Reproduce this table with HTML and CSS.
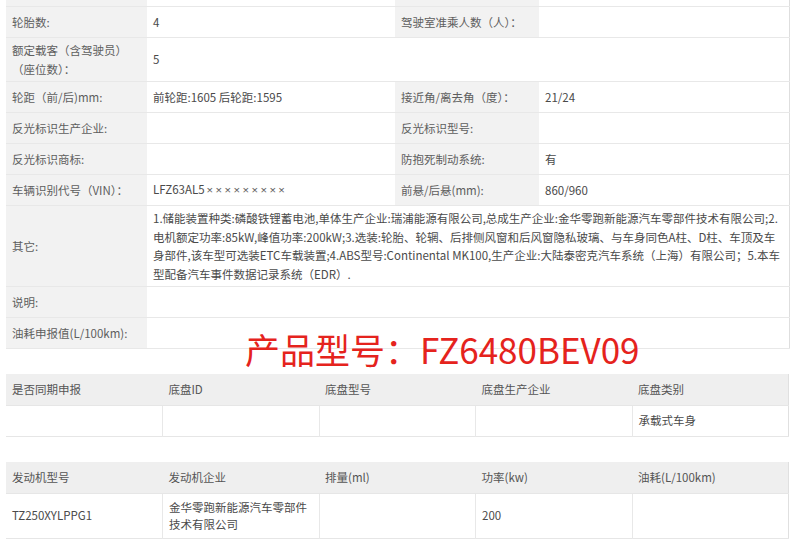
FILE: index.html
```html
<!DOCTYPE html>
<html lang="zh-CN">
<head>
  <meta charset="UTF-8">
  <title>产品型号 FZ6480BEV09</title>
  <link rel="stylesheet" href="styles.css">
</head>
<body>
  <div class="page">
    <table class="params">
      <colgroup>
        <col class="c-label1">
        <col class="c-value1">
        <col class="c-label2">
        <col class="c-value2">
      </colgroup>
      <tr class="cut">
        <th></th><td></td><th></th><td></td>
      </tr>
      <tr>
        <th>轮胎数:</th>
        <td>4</td>
        <th>驾驶室准乘人数（人）：</th>
        <td></td>
      </tr>
      <tr>
        <th>额定载客（含驾驶员）（座位数）：</th>
        <td colspan="3">5</td>
      </tr>
      <tr>
        <th>轮距（前/后)mm:</th>
        <td>前轮距:1605 后轮距:1595</td>
        <th>接近角/离去角（度）：</th>
        <td>21/24</td>
      </tr>
      <tr>
        <th>反光标识生产企业:</th>
        <td></td>
        <th>反光标识型号:</th>
        <td></td>
      </tr>
      <tr>
        <th>反光标识商标:</th>
        <td></td>
        <th>防抱死制动系统:</th>
        <td>有</td>
      </tr>
      <tr>
        <th>车辆识别代号（VIN）：</th>
        <td>LFZ63AL5<span class="mask">×××××××××</span></td>
        <th>前悬/后悬(mm):</th>
        <td>860/960</td>
      </tr>
      <tr>
        <th>其它:</th>
        <td colspan="3">1.储能装置种类:磷酸铁锂蓄电池,单体生产企业:瑞浦能源有限公司,总成生产企业:金华零跑新能源汽车零部件技术有限公司;2.电机额定功率:85kW,峰值功率:200kW;3.选装:轮胎、轮辋、后排侧风窗和后风窗隐私玻璃、与车身同色A柱、D柱、车顶及车身部件,该车型可选装ETC车载装置;4.ABS型号:Continental MK100,生产企业:大陆泰密克汽车系统（上海）有限公司；5.本车型配备汽车事件数据记录系统（EDR）.</td>
      </tr>
      <tr>
        <th>说明:</th>
        <td colspan="3"></td>
      </tr>
      <tr>
        <th>油耗申报值(L/100km):</th>
        <td colspan="3"></td>
      </tr>
    </table>

    <div class="model-title">产品型号：FZ6480BEV09</div>

    <table class="sub">
      <tr>
        <th>是否同期申报</th>
        <th>底盘ID</th>
        <th>底盘型号</th>
        <th>底盘生产企业</th>
        <th>底盘类别</th>
      </tr>
      <tr>
        <td></td>
        <td></td>
        <td></td>
        <td></td>
        <td>承载式车身</td>
      </tr>
    </table>

    <table class="sub">
      <tr>
        <th>发动机型号</th>
        <th>发动机企业</th>
        <th>排量(ml)</th>
        <th>功率(kw)</th>
        <th>油耗(L/100km)</th>
      </tr>
      <tr class="tall">
        <td>TZ250XYLPPG1</td>
        <td>金华零跑新能源汽车零部件技术有限公司</td>
        <td></td>
        <td>200</td>
        <td></td>
      </tr>
    </table>
  </div>
</body>
</html>
```

FILE: styles.css
```css
body {
  margin: 0;
  padding: 0;
  background: #fff;
  font-family: "Noto Sans CJK SC", "Noto Sans", sans-serif;
  font-size: 11.5px;
  color: #555;
}
.page {
  position: relative;
  width: 783px;
  margin-left: 6px;
}
table {
  width: 100%;
  border-collapse: collapse;
  table-layout: fixed;
}
.params {
  border-right: 1px solid #dedede;
}
.params th,
.params td {
  border-bottom: 1px solid #e8e8e8;
  padding: 3px 5px 3px 6px;
  line-height: 18.5px;
  text-align: left;
  font-weight: normal;
  vertical-align: middle;
}
.params th {
  background: #f2f2f2;
  color: #5e5e5e;
}
.params td {
  color: #4a4a4a;
}
.params tr {
  height: 31px;
}
.params tr.cut {
  height: 6px;
}
.params tr.cut th,
.params tr.cut td {
  padding: 0;
  height: 6px;
}
.c-label1 { width: 141px; }
.c-value1 { width: 248px; }
.c-label2 { width: 144px; }
.c-value2 { width: 250px; }

.mask {
  margin-left: 2px;
  font-family: "Noto Sans", sans-serif;
  letter-spacing: 2.4px;
  color: #666;
}

.model-title {
  position: absolute;
  left: 239px;
  top: 329px;
  font-size: 35px;
  line-height: 40px;
  color: #e5231d;
  white-space: nowrap;
}

.sub {
  margin-top: 25px;
  border-bottom: 1px solid #e6e6e6;
  border-right: 1px solid #e0e0e0;
}
.sub th,
.sub td {
  padding: 4px 6px;
  line-height: 17.5px;
  text-align: left;
  font-weight: normal;
  vertical-align: middle;
}
.sub th {
  background: #efefef;
  color: #555;
  height: 23px;
  border-bottom: 1px solid #e6e6e6;
}
.sub td {
  height: 22px;
  color: #4a4a4a;
  border-left: 1px solid #e8e8e8;
}
.sub td:first-child {
  border-left: none;
}
.sub tr.tall td {
  height: 36px;
}
```
